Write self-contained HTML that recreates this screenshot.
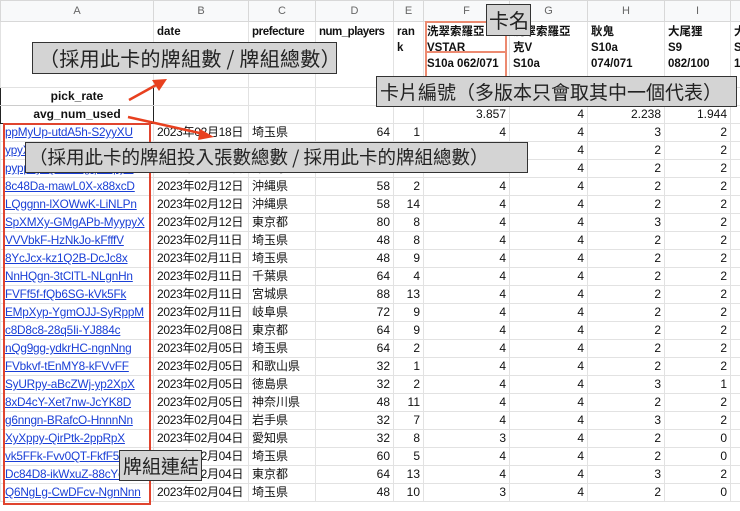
<!DOCTYPE html>
<html><head><meta charset="utf-8"><style>
*{margin:0;padding:0;box-sizing:border-box}
body{width:740px;height:511px;overflow:hidden;background:#fff;position:relative;font-family:"Liberation Sans","Noto Sans CJK TC",sans-serif;}
table{position:absolute;left:0;top:0;border-collapse:collapse;table-layout:fixed;width:752px;font-size:12px;color:#111}
td{border:1px solid #e2e2e2;height:18px;padding:0 3px;white-space:nowrap;overflow:hidden;line-height:17px}
tr.h td{height:21px;background:#f8f9fa;color:#666;font-size:11px;text-align:center;border-color:#d8d8d8}
tr.n td{height:66px;vertical-align:top;font-weight:bold;line-height:16px;padding-top:2px;white-space:normal;word-break:break-all;font-size:11.5px}
td.r{text-align:right}
td.l{color:#1a3fd6;text-decoration:underline;padding-left:4px;letter-spacing:-0.2px;font-size:11.8px}
td.d{letter-spacing:-0.3px}
td.b{font-weight:bold;text-align:center}
.ov{position:absolute;background:#d4d4d4;border:1.5px solid #333;font-family:"Noto Sans CJK TC",sans-serif;color:#222;white-space:nowrap;line-height:1;overflow:hidden}
</style></head><body>
<table>
<colgroup><col style="width:153px"><col style="width:95px"><col style="width:67px"><col style="width:78px"><col style="width:30px"><col style="width:86px"><col style="width:78px"><col style="width:77px"><col style="width:66px"><col style="width:22px"></colgroup>
<tr class="h"><td>A</td><td>B</td><td>C</td><td>D</td><td>E</td><td>F</td><td>G</td><td>H</td><td>I</td><td></td></tr>
<tr class="n"><td></td><td>date</td><td style="letter-spacing:-0.4px">prefecture</td><td style="letter-spacing:-0.5px">num_players</td><td>ran k</td><td>洗翠索羅亞<br>VSTAR<br>S10a 062/071</td><td>洗翠索羅亞<br>克V<br>S10a</td><td>耿鬼<br>S10a<br>074/071</td><td>大尾狸<br>S9<br>082/100</td><td>大<br>S<br>1</td></tr>
<tr><td class="b" style="border:1.5px solid #222;border-bottom-color:#ccc">pick_rate</td><td></td><td></td><td></td><td></td><td></td><td></td><td></td><td></td><td></td></tr>
<tr><td class="b" style="border:1.5px solid #222;border-top:none">avg_num_used</td><td></td><td></td><td></td><td></td><td class="r">3.857</td><td class="r">4</td><td class="r">2.238</td><td class="r">1.944</td><td></td></tr>
<tr><td class="l">ppMyUp-utdA5h-S2yyXU</td><td class="d">2023年02月18日</td><td>埼玉県</td><td class="r">64</td><td class="r">1</td><td class="r">4</td><td class="r">4</td><td class="r">3</td><td class="r">2</td><td></td></tr>
<tr><td class="l">ypyXpp-Hkk8Gc-xFvkFf</td><td class="d">2023年02月18日</td><td>埼玉県</td><td class="r">64</td><td class="r">3</td><td class="r">4</td><td class="r">4</td><td class="r">2</td><td class="r">2</td><td></td></tr>
<tr><td class="l">pypp2y-QuH8Hg-pnnpyN</td><td class="d">2023年02月12日</td><td>沖縄県</td><td class="r">58</td><td class="r">1</td><td class="r">4</td><td class="r">4</td><td class="r">2</td><td class="r">2</td><td></td></tr>
<tr><td class="l">8c48Da-mawL0X-x88xcD</td><td class="d">2023年02月12日</td><td>沖縄県</td><td class="r">58</td><td class="r">2</td><td class="r">4</td><td class="r">4</td><td class="r">2</td><td class="r">2</td><td></td></tr>
<tr><td class="l">LQggnn-lXOWwK-LiNLPn</td><td class="d">2023年02月12日</td><td>沖縄県</td><td class="r">58</td><td class="r">14</td><td class="r">4</td><td class="r">4</td><td class="r">2</td><td class="r">2</td><td></td></tr>
<tr><td class="l">SpXMXy-GMgAPb-MyypyX</td><td class="d">2023年02月12日</td><td>東京都</td><td class="r">80</td><td class="r">8</td><td class="r">4</td><td class="r">4</td><td class="r">3</td><td class="r">2</td><td></td></tr>
<tr><td class="l">VVVbkF-HzNkJo-kFfffV</td><td class="d">2023年02月11日</td><td>埼玉県</td><td class="r">48</td><td class="r">8</td><td class="r">4</td><td class="r">4</td><td class="r">2</td><td class="r">2</td><td></td></tr>
<tr><td class="l">8YcJcx-kz1Q2B-DcJc8x</td><td class="d">2023年02月11日</td><td>埼玉県</td><td class="r">48</td><td class="r">9</td><td class="r">4</td><td class="r">4</td><td class="r">2</td><td class="r">2</td><td></td></tr>
<tr><td class="l">NnHQgn-3tClTL-NLgnHn</td><td class="d">2023年02月11日</td><td>千葉県</td><td class="r">64</td><td class="r">4</td><td class="r">4</td><td class="r">4</td><td class="r">2</td><td class="r">2</td><td></td></tr>
<tr><td class="l">FVFf5f-fQb6SG-kVk5Fk</td><td class="d">2023年02月11日</td><td>宮城県</td><td class="r">88</td><td class="r">13</td><td class="r">4</td><td class="r">4</td><td class="r">2</td><td class="r">2</td><td></td></tr>
<tr><td class="l">EMpXyp-YgmOJJ-SyRppM</td><td class="d">2023年02月11日</td><td>岐阜県</td><td class="r">72</td><td class="r">9</td><td class="r">4</td><td class="r">4</td><td class="r">2</td><td class="r">2</td><td></td></tr>
<tr><td class="l">c8D8c8-28q5Ii-YJ884c</td><td class="d">2023年02月08日</td><td>東京都</td><td class="r">64</td><td class="r">9</td><td class="r">4</td><td class="r">4</td><td class="r">2</td><td class="r">2</td><td></td></tr>
<tr><td class="l">nQg9gg-ydkrHC-ngnNng</td><td class="d">2023年02月05日</td><td>埼玉県</td><td class="r">64</td><td class="r">2</td><td class="r">4</td><td class="r">4</td><td class="r">2</td><td class="r">2</td><td></td></tr>
<tr><td class="l">FVbkvf-tEnMY8-kFVvFF</td><td class="d">2023年02月05日</td><td>和歌山県</td><td class="r">32</td><td class="r">1</td><td class="r">4</td><td class="r">4</td><td class="r">2</td><td class="r">2</td><td></td></tr>
<tr><td class="l">SyURpy-aBcZWj-yp2XpX</td><td class="d">2023年02月05日</td><td>徳島県</td><td class="r">32</td><td class="r">2</td><td class="r">4</td><td class="r">4</td><td class="r">3</td><td class="r">1</td><td></td></tr>
<tr><td class="l">8xD4cY-Xet7nw-JcYK8D</td><td class="d">2023年02月05日</td><td>神奈川県</td><td class="r">48</td><td class="r">11</td><td class="r">4</td><td class="r">4</td><td class="r">2</td><td class="r">2</td><td></td></tr>
<tr><td class="l">g6nngn-BRafcO-HnnnNn</td><td class="d">2023年02月04日</td><td>岩手県</td><td class="r">32</td><td class="r">7</td><td class="r">4</td><td class="r">4</td><td class="r">3</td><td class="r">2</td><td></td></tr>
<tr><td class="l">XyXppy-QirPtk-2ppRpX</td><td class="d">2023年02月04日</td><td>愛知県</td><td class="r">32</td><td class="r">8</td><td class="r">3</td><td class="r">4</td><td class="r">2</td><td class="r">0</td><td></td></tr>
<tr><td class="l">vk5FFk-Fvv0QT-FkfF5k</td><td class="d">2023年02月04日</td><td>埼玉県</td><td class="r">60</td><td class="r">5</td><td class="r">4</td><td class="r">4</td><td class="r">2</td><td class="r">0</td><td></td></tr>
<tr><td class="l">Dc84D8-ikWxuZ-88cYcx</td><td class="d">2023年02月04日</td><td>東京都</td><td class="r">64</td><td class="r">13</td><td class="r">4</td><td class="r">4</td><td class="r">3</td><td class="r">2</td><td></td></tr>
<tr><td class="l">Q6NgLg-CwDFcv-NgnNnn</td><td class="d">2023年02月04日</td><td>埼玉県</td><td class="r">48</td><td class="r">10</td><td class="r">3</td><td class="r">4</td><td class="r">2</td><td class="r">0</td><td></td></tr>
</table>
<div style="position:absolute;left:3px;top:123px;width:148px;height:382px;border:2px solid #e0442e"></div>
<div style="position:absolute;left:425px;top:21px;width:82px;height:66px;border:2px solid #ec8a70;border-bottom:none"></div>
<div style="position:absolute;left:425px;top:51px;width:82px;height:2px;background:#ec8a70"></div>
<svg style="position:absolute;left:0;top:0" width="740" height="511">
<line x1="129" y1="100" x2="158" y2="84" stroke="#e8401f" stroke-width="2.5"/>
<polygon points="167,79 152,80 159,91" fill="#e8401f"/>
<line x1="128" y1="117" x2="204" y2="134" stroke="#e8401f" stroke-width="2.5"/>
<polygon points="214,137 200,129 198,140" fill="#e8401f"/>
</svg>
<div class="ov" style="left:32px;top:42px;width:305px;height:32px;font-size:20px;padding:5px 0 0 6px;letter-spacing:0.3px">（採用此卡的牌組數 / 牌組總數）</div>
<div class="ov" style="left:486px;top:4px;width:45px;height:32px;font-size:20px;padding:5px 0 0 2px">卡名</div>
<div class="ov" style="left:376px;top:76px;width:361px;height:31px;font-size:19px;padding:5px 0 0 3px">卡片編號（多版本只會取其中一個代表）</div>
<div class="ov" style="left:25px;top:142px;width:503px;height:31px;font-size:18.5px;padding:5px 0 0 3px">（採用此卡的牌組投入張數總數 / 採用此卡的牌組總數）</div>
<div class="ov" style="left:119px;top:450px;width:83px;height:31px;font-size:19px;padding:5px 0 0 3px">牌組連結</div>
</body></html>
